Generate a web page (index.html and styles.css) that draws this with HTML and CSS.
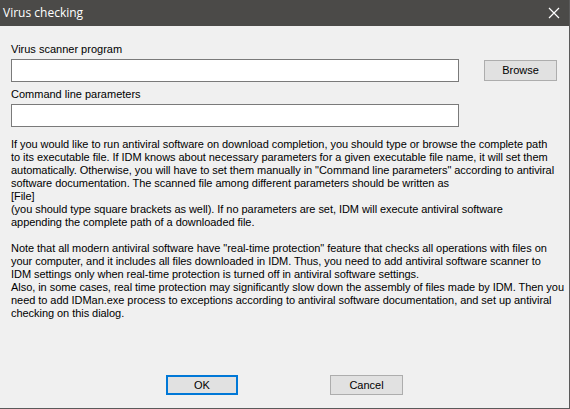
FILE: index.html
```html
<!DOCTYPE html>
<html>
<head>
<meta charset="utf-8">
<link rel="stylesheet" href="styles.css">
</head>
<body>
<div class="window">
  <div class="titlebar">
    <span class="title">Virus checking</span>
    <svg class="close" width="12" height="12" viewBox="0 0 12 12"><path d="M1 1 L11 11 M11 1 L1 11" stroke="#ffffff" stroke-width="1.2" fill="none"/></svg>
  </div>
  <div class="content">
    <div class="label first">Virus scanner program</div>
    <div class="row">
      <div class="input"></div>
      <div class="btn browse">Browse</div>
    </div>
    <div class="label second">Command line parameters</div>
    <div class="row">
      <div class="input"></div>
    </div>
    <div class="info">If you would like to run antiviral software on download completion, you should type or browse the complete path<br>to its executable file. If IDM knows about necessary parameters for a given executable file name, it will set them<br>automatically. Otherwise, you will have to set them manually in "Command line parameters" according to antiviral<br>software documentation. The scanned file among different parameters should be written as<br>[File]<br>(you should type square brackets as well). If no parameters are set, IDM will execute antiviral software<br>appending the complete path of a downloaded file.<br><br>Note that all modern antiviral software have "real-time protection" feature that checks all operations with files on<br>your computer, and it includes all files downloaded in IDM. Thus, you need to add antiviral software scanner to<br>IDM settings only when real-time protection is turned off in antiviral software settings.<br>Also, in some cases, real time protection may significantly slow down the assembly of files made by IDM. Then you<br>need to add IDMan.exe process to exceptions according to antiviral software documentation, and set up antiviral<br>checking on this dialog.</div>
    <div class="buttons">
      <div class="btn ok">OK</div>
      <div class="btn cancel">Cancel</div>
    </div>
  </div>
</div>
</body>
</html>
```
FILE: styles.css
```css
html, body {
  margin: 0;
  padding: 0;
}
body {
  width: 570px;
  height: 409px;
  overflow: hidden;
  background: #f0f0f0;
  font-family: "Liberation Sans", Arial, sans-serif;
  font-size: 11px;
  color: #000;
}
.window {
  box-sizing: border-box;
  width: 570px;
  height: 409px;
  border-right: 1px solid #5a5a5a;
  border-bottom: 1px solid #5a5a5a;
  background: #f0f0f0;
}
.titlebar {
  height: 26px;
  background: #4b4a48;
  display: flex;
  align-items: center;
  justify-content: space-between;
  padding: 0 9px 0 3px;
}
.title {
  color: #ffffff;
  font-family: "Open Sans", "Noto Sans", sans-serif;
  font-size: 12px;
  line-height: 26px;
}
.close {
  display: block;
}
.content {
  padding: 17px 0 0 11px;
}
.label {
  line-height: 13px;
  height: 13px;
}
.label.first {
  margin-bottom: 3px;
}
.label.second {
  margin-top: 6px;
  margin-bottom: 3px;
}
.row {
  display: flex;
  align-items: center;
  gap: 25px;
}
.input {
  box-sizing: border-box;
  width: 448px;
  height: 23px;
  background: #ffffff;
  border: 1px solid #7a7a7a;
}
.btn {
  box-sizing: border-box;
  height: 21px;
  background: #e1e1e1;
  border: 1px solid #adadad;
  display: flex;
  align-items: center;
  justify-content: center;
  line-height: 13px;
}
.browse {
  width: 73px;
}
.info {
  margin-top: 11px;
  line-height: 13px;
  white-space: nowrap;
  letter-spacing: -0.05px;
}
.buttons {
  display: flex;
  justify-content: center;
  gap: 92px;
  margin-top: 55px;
  margin-left: -11px;
}
.ok {
  width: 72px;
  height: 20px;
  border: 2px solid #0078d7;
}
.cancel {
  width: 73px;
  height: 20px;
}
```
